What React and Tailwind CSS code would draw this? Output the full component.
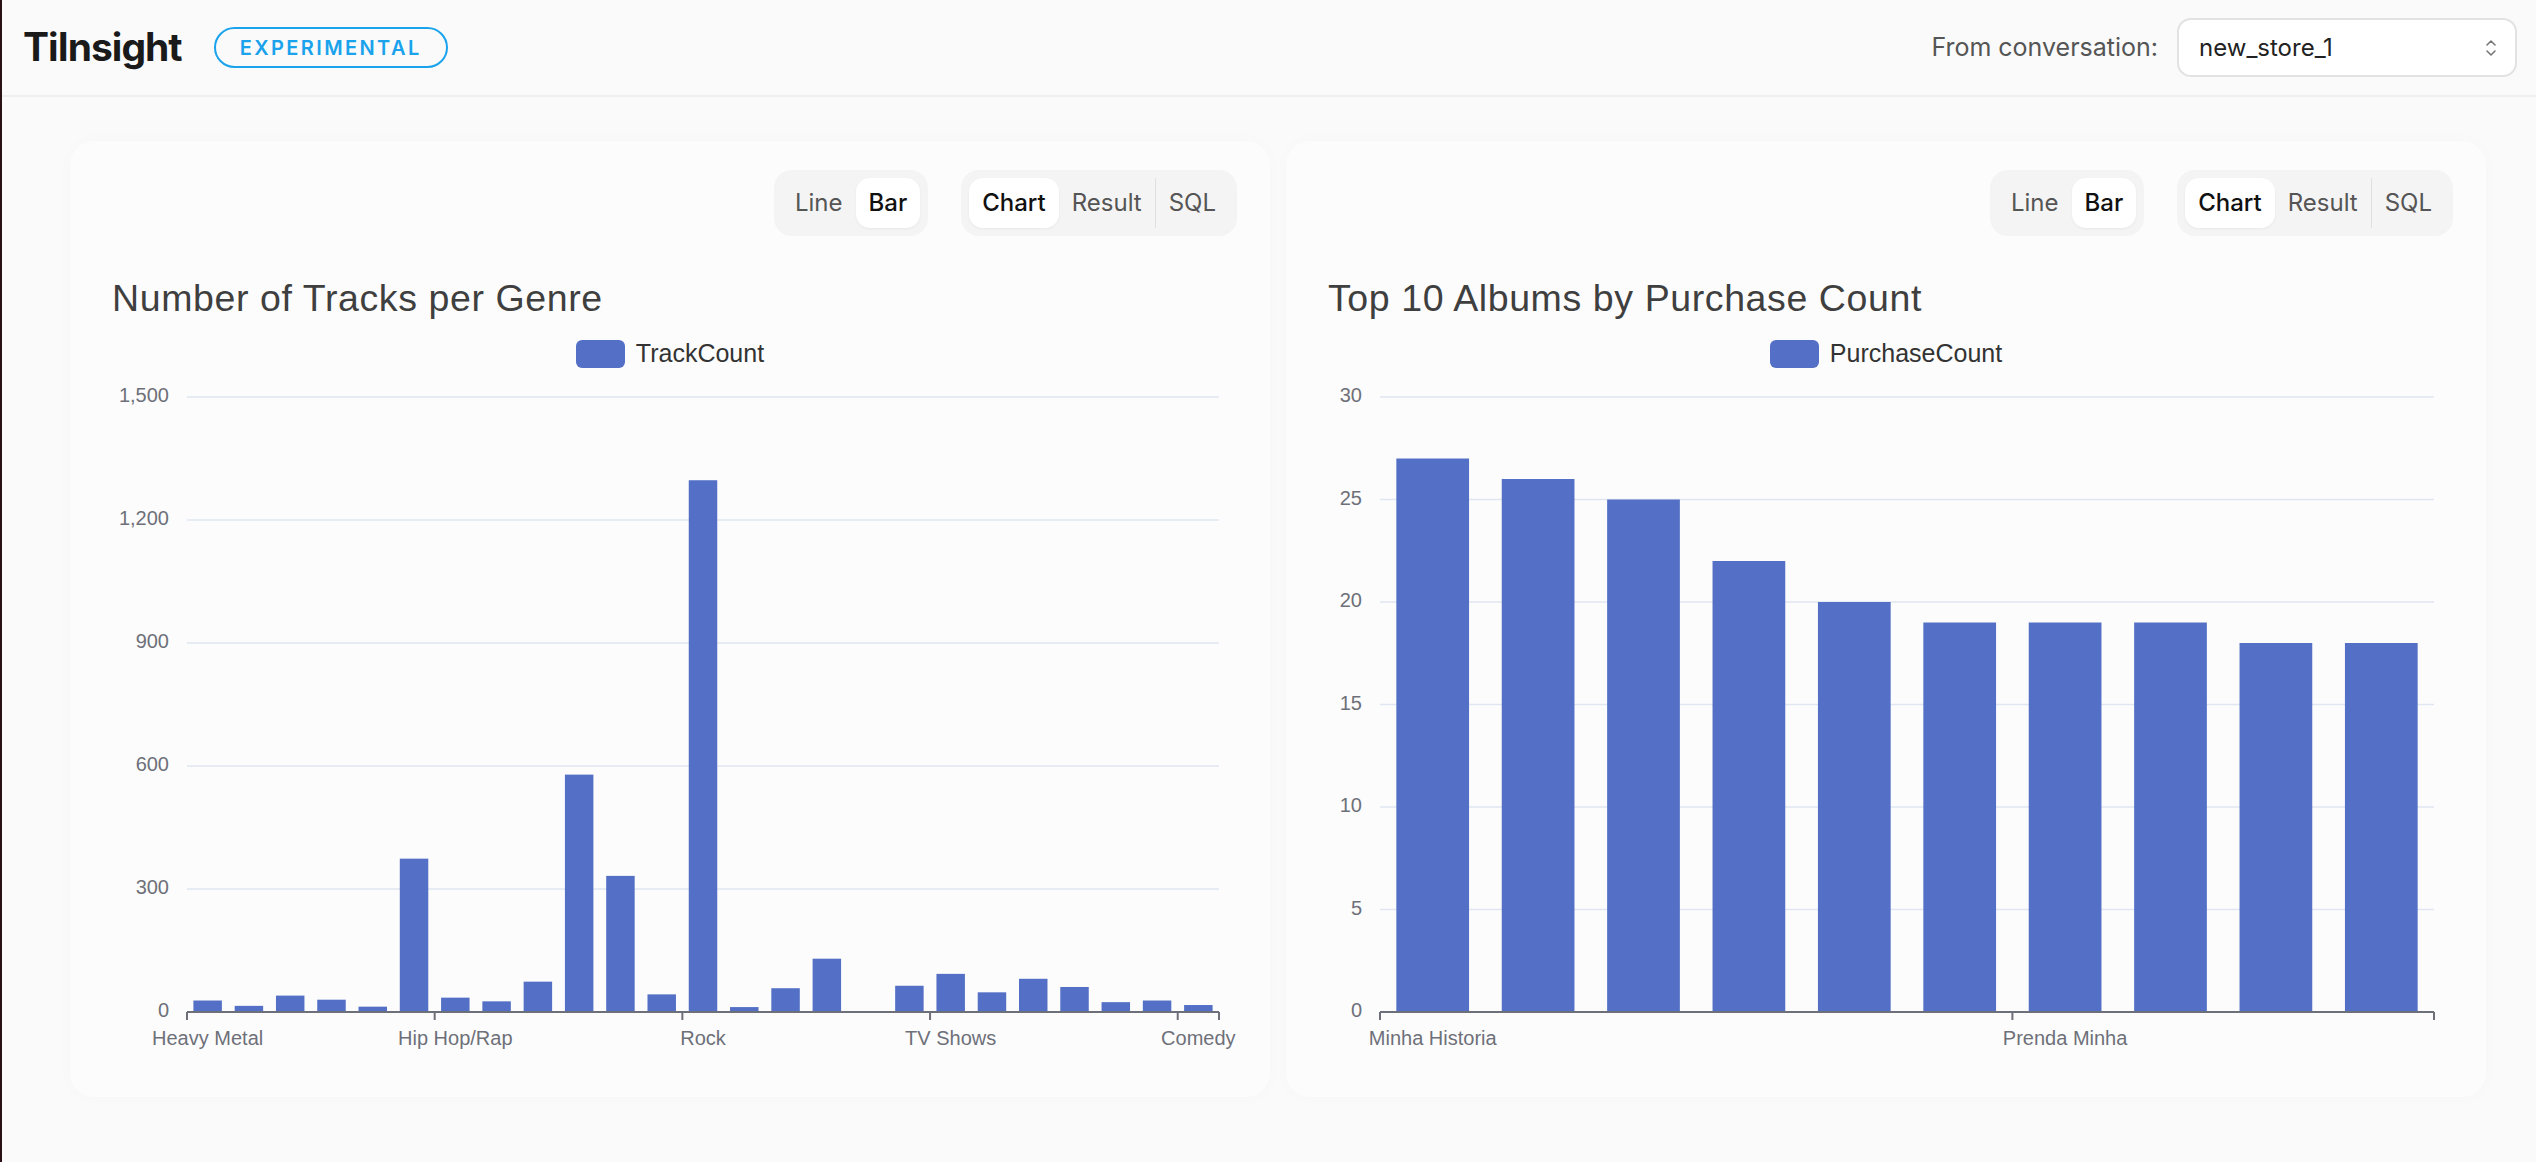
import React from 'react';

const genres = [
  ['Heavy Metal', 28], ['Bossa Nova', 15], ['Alternative', 40], ['Electronica/Dance', 30],
  ['Science Fiction', 13], ['Metal', 374], ['Hip Hop/Rap', 35], ['Sci Fi & Fantasy', 26],
  ['Classical', 74], ['Latin', 579], ['Alternative & Punk', 332], ['Soundtrack', 43],
  ['Rock', 1297], ['Rock And Roll', 12], ['Reggae', 58], ['Jazz', 130], ['Opera', 1],
  ['Drama', 64], ['TV Shows', 93], ['Pop', 48], ['Blues', 81], ['R&B/Soul', 61],
  ['Easy Listening', 24], ['World', 28], ['Comedy', 17],
];

const albums = [
  ['Minha Historia', 27], ['Greatest Hits', 26], ['Unplugged', 25], ['Acústico', 22],
  ['Greatest Kiss', 20], ['Chill: Brazil (Disc 2)', 19], ['Prenda Minha', 19],
  ['My Generation - The Very Best Of The Who', 19], ['The Doors', 18], ['Lost, Season 3', 18],
];

const charts = [
  {
    title: 'Number of Tracks per Genre',
    series: 'TrackCount',
    data: genres,
    max: 1500,
    step: 300,
    left: 117,
    right: 1149,
    labelEvery: 6,
  },
  {
    title: 'Top 10 Albums by Purchase Count',
    series: 'PurchaseCount',
    data: albums,
    max: 30,
    step: 5,
    left: 94,
    right: 1148,
    labelEvery: 6,
  },
];

const Segmented = ({ items, active, divider }) => (
  <div className="flex items-center rounded-[18px] bg-[#f4f4f4] p-2">
    {items.map((it, i) => (
      <React.Fragment key={it}>
        {divider === i && <div className="h-[50px] w-px bg-[#e0e0e0]" />}
        <div
          className={
            it === active
              ? 'flex h-[50px] items-center rounded-[14px] bg-white px-[13px] text-[24px] font-medium text-[#111] shadow-[0_1px_3px_rgba(0,0,0,0.05)]'
              : 'flex h-[50px] items-center px-[13px] text-[24px] text-[#555]'
          }
        >
          {it}
        </div>
      </React.Fragment>
    ))}
  </div>
);

const BarChart = ({ chart }) => {
  const top = 19;
  const axis = 634;
  const { data, max, step, left, right, labelEvery } = chart;
  const catW = (right - left) / data.length;
  const barW = catW * 0.69;
  const ticks = [];
  for (let v = 0; v <= max; v += step) ticks.push(v);
  const y = (v) => axis - (v / max) * (axis - top);

  return (
    <svg width="1200" height="700" viewBox="0 0 1200 700" className="block font-['Liberation_Sans',sans-serif]">
      {ticks.map((t) => (
        <g key={t}>
          {t > 0 && <line x1={left} x2={right} y1={y(t)} y2={y(t)} stroke="#e0e6f1" strokeWidth="1.6" />}
          <text x={left - 18} y={y(t)} fontSize="20" fill="#6e7079" textAnchor="end" dominantBaseline="middle">
            {t.toLocaleString('en-US')}
          </text>
        </g>
      ))}
      {data.map(([name, v], i) => (
        <rect
          key={name}
          x={left + i * catW + (catW - barW) / 2}
          y={y(v)}
          width={barW}
          height={axis - y(v)}
          fill="#5470c6"
        />
      ))}
      <line x1={left} x2={right} y1={axis} y2={axis} stroke="#6e7079" strokeWidth="2" />
      {data.map(([name], i) =>
        i % labelEvery === 0 ? (
          <g key={name}>
            <line x1={left + i * catW} x2={left + i * catW} y1={axis} y2={axis + 8} stroke="#6e7079" strokeWidth="2" />
            <text x={left + (i + 0.5) * catW} y={axis + 28} fontSize="20" fill="#6e7079" textAnchor="middle" dominantBaseline="middle">
              {name}
            </text>
          </g>
        ) : null
      )}
      <line x1={right} x2={right} y1={axis} y2={axis + 8} stroke="#6e7079" strokeWidth="2" />
    </svg>
  );
};

const ChartCard = ({ chart }) => (
  <div className="rounded-[24px] bg-[#fcfcfc] pt-[29px] pb-[19px] shadow-[0_0_18px_rgba(0,0,0,0.018)]">
    <div className="flex justify-end gap-[33px] pr-[33px]">
      <Segmented items={['Line', 'Bar']} active="Bar" />
      <Segmented items={['Chart', 'Result', 'SQL']} active="Chart" divider={2} />
    </div>
    <h2 className="mt-[40px] pl-[42px] font-['Liberation_Sans',sans-serif] text-[37.5px] leading-[44px] tracking-[0.6px] text-[#3f3f3f]">
      {chart.title}
    </h2>
    <div className="mt-[20px] flex h-[28px] items-center justify-center gap-[11px]">
      <div className="h-[28px] w-[49px] rounded-[6px] bg-[#5470c6]" />
      <span className="font-['Liberation_Sans',sans-serif] text-[25px] text-[#333]">{chart.series}</span>
    </div>
    <div className="mt-[10px]">
      <BarChart chart={chart} />
    </div>
  </div>
);

export default function App() {
  return (
    <div className="min-h-screen border-l-2 border-[#2a1116] bg-[#fafafa] font-['Inter',sans-serif]">
      <header className="flex h-[97px] items-center justify-between border-b-2 border-[#efefef] pl-[21px] pr-[19px]">
        <div className="flex items-center gap-[32px]">
          <h1 className="text-[39px] font-bold tracking-tight text-[#1a1a1a]">TiInsight</h1>
          <span className="flex h-[41px] items-center rounded-full border-2 border-[#1aa3ec] px-6 text-[20px] font-semibold tracking-[0.12em] text-[#1aa3ec]">
            EXPERIMENTAL
          </span>
        </div>
        <div className="flex items-center gap-[19px]">
          <span className="text-[25px] text-[#555]">From conversation:</span>
          <div className="flex h-[59px] w-[340px] items-center justify-between rounded-[14px] border-2 border-[#e2e2e2] bg-white pl-[20px] pr-[18px]">
            <span className="text-[24px] text-[#222]">new_store_1</span>
            <svg width="12" height="22" viewBox="0 0 12 22" fill="none" stroke="#777" strokeWidth="1.6" strokeLinecap="round" strokeLinejoin="round">
              <path d="M2 8l4-4 4 4" />
              <path d="M2 14l4 4 4-4" />
            </svg>
          </div>
        </div>
      </header>
      <main className="grid grid-cols-2 gap-4 pt-[44px] pl-[68px] pr-[50px] pb-[40px]">
        {charts.map((c) => (
          <ChartCard key={c.title} chart={c} />
        ))}
      </main>
    </div>
  );
}
